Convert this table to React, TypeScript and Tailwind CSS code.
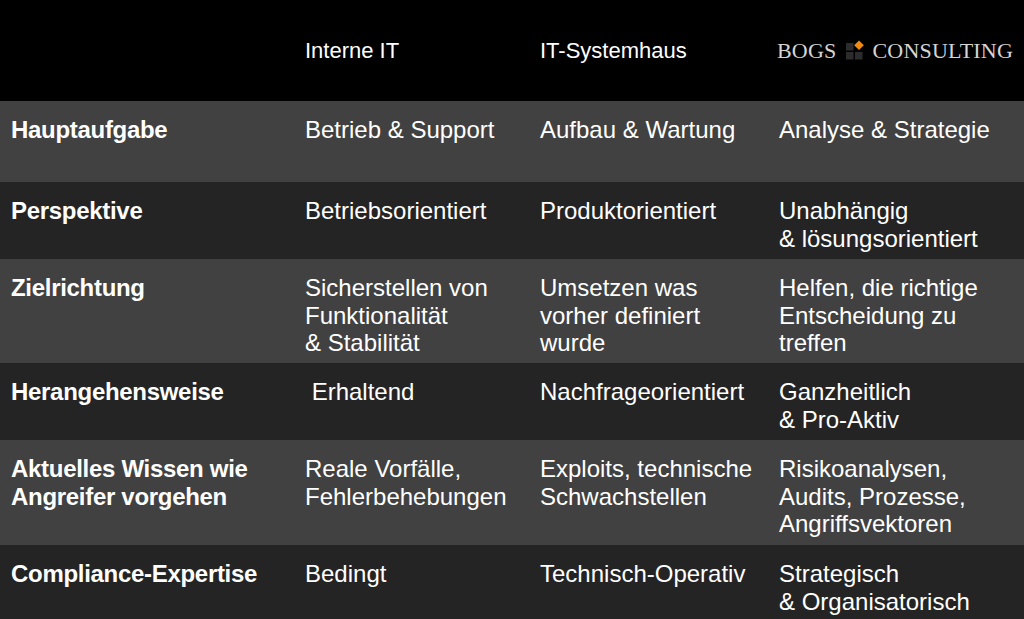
import React from "react";

type Row = {
  label: string[];
  cells: string[][];
  height: string;
  shade: string;
};

const rows: Row[] = [
  {
    label: ["Hauptaufgabe"],
    cells: [["Betrieb & Support"], ["Aufbau & Wartung"], ["Analyse & Strategie"]],
    height: "h-[81px]",
    shade: "bg-[#414141]",
  },
  {
    label: ["Perspektive"],
    cells: [["Betriebsorientiert"], ["Produktorientiert"], ["Unabhängig", "& lösungsorientiert"]],
    height: "h-[77px]",
    shade: "bg-[#242424]",
  },
  {
    label: ["Zielrichtung"],
    cells: [
      ["Sicherstellen von", "Funktionalität", "& Stabilität"],
      ["Umsetzen was", "vorher definiert", "wurde"],
      ["Helfen, die richtige", "Entscheidung zu", "treffen"],
    ],
    height: "h-[104px]",
    shade: "bg-[#414141]",
  },
  {
    label: ["Herangehensweise"],
    cells: [["\u00a0Erhaltend"], ["Nachfrageorientiert"], ["Ganzheitlich", "& Pro-Aktiv"]],
    height: "h-[77px]",
    shade: "bg-[#242424]",
  },
  {
    label: ["Aktuelles Wissen wie", "Angreifer vorgehen"],
    cells: [
      ["Reale Vorfälle,", "Fehlerbehebungen"],
      ["Exploits, technische", "Schwachstellen"],
      ["Risikoanalysen,", "Audits, Prozesse,", "Angriffsvektoren"],
    ],
    height: "h-[105px]",
    shade: "bg-[#414141]",
  },
  {
    label: ["Compliance-Expertise"],
    cells: [["Bedingt"], ["Technisch-Operativ"], ["Strategisch", "& Organisatorisch"]],
    height: "h-[80px]",
    shade: "bg-[#242424]",
  },
];

const cols = "grid grid-cols-[305px_235px_239px_1fr]";

function Lines({ lines }: { lines: string[] }) {
  return (
    <>
      {lines.map((l, i) => (
        <div key={i} className="whitespace-nowrap">{l}</div>
      ))}
    </>
  );
}

function BogsMark() {
  return (
    <svg width="22" height="22" viewBox="0 0 22 22" className="shrink-0">
      <rect x="2" y="4" width="7.5" height="7.5" fill="#2c2c2c" />
      <rect x="2" y="13" width="7.5" height="7.5" fill="#2c2c2c" />
      <rect x="11" y="13" width="7.5" height="7.5" fill="#2c2c2c" />
      <path d="M15 1.5 L19.8 6.3 L15 11.1 L10.2 6.3 Z" fill="#f28a12" />
    </svg>
  );
}

export default function App() {
  return (
    <div className="w-[1024px] h-[619px] overflow-hidden bg-[#242424] text-white font-['Liberation_Sans',Arial,sans-serif]">
      <div className={`${cols} h-[101px] bg-black pt-[37px] text-[22px] leading-[28px]`}>
        <div />
        <div>Interne IT</div>
        <div>IT-Systemhaus</div>
        <div className="-ml-[2px] flex items-start gap-[7px] font-['Liberation_Serif','Times_New_Roman',serif] text-[22px] leading-[28px] text-[#d4d4d4] tracking-[0.2px]">
          <span>BOGS</span>
          <span className="mt-[2px]"><BogsMark /></span>
          <span>CONSULTING</span>
        </div>
      </div>
      {rows.map((r, i) => (
        <div key={i} className={`${cols} ${r.height} ${r.shade} pt-[15px] text-[24px] leading-[27.5px]`}>
          <div className="pl-[11px] font-bold tracking-[-0.3px]">
            <Lines lines={r.label} />
          </div>
          {r.cells.map((c, j) => (
            <div key={j}>
              <Lines lines={c} />
            </div>
          ))}
        </div>
      ))}
    </div>
  );
}
